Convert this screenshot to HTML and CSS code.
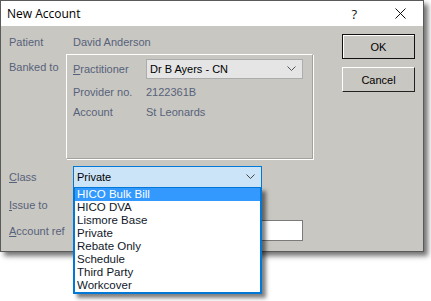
FILE: index.html
```html
<!DOCTYPE html>
<html lang="en">
<head>
  <meta charset="UTF-8" />
  <title>New Account</title>
  <link rel="stylesheet" href="styles.css">
</head>
<body>
  <div class="window">
    <div class="titlebar">
      <span class="title">New Account</span>
      <span class="help">?</span>
      <svg class="close" width="11" height="11" viewBox="0 0 11 11">
        <path d="M0.5 0.5 L10.5 10.5 M10.5 0.5 L0.5 10.5" stroke="#111" stroke-width="1" fill="none"/>
      </svg>
    </div>

    <div class="content">
      <div class="form">
        <div class="row patient">
          <span class="label">Patient</span>
          <span class="value">David Anderson</span>
        </div>

        <div class="row banked">
          <span class="label short">Banked to</span>
          <div class="group">
            <div class="grow">
              <span class="glabel"><u>P</u>ractitioner</span>
              <div class="combo">
                <span>Dr B Ayers - CN</span>
                <svg width="9" height="6" viewBox="0 0 9 6"><path d="M0.5 0.5 L4.5 4.5 L8.5 0.5" stroke="#555" fill="none"/></svg>
              </div>
            </div>
            <div class="grow text">
              <span class="glabel">Provider no.</span>
              <span class="value">2122361B</span>
            </div>
            <div class="grow text">
              <span class="glabel">Account</span>
              <span class="value">St Leonards</span>
            </div>
          </div>
        </div>

        <div class="row class-row">
          <span class="label"><u>C</u>lass</span>
          <div class="combo active">
            <span>Private</span>
            <svg width="9" height="6" viewBox="0 0 9 6"><path d="M0.5 0.5 L4.5 4.5 L8.5 0.5" stroke="#444" fill="none"/></svg>
          </div>
        </div>

        <div class="row issue">
          <span class="label"><u>I</u>ssue to</span>
        </div>

        <div class="row ref">
          <span class="label"><u>A</u>ccount ref</span>
          <div class="input"></div>
        </div>
      </div>

      <div class="buttons">
        <div class="btn default">OK</div>
        <div class="btn">Cancel</div>
      </div>
    </div>
  </div>

  <ul class="droplist">
    <li class="selected">HICO Bulk Bill</li>
    <li>HICO DVA</li>
    <li>Lismore Base</li>
    <li>Private</li>
    <li>Rebate Only</li>
    <li>Schedule</li>
    <li>Third Party</li>
    <li>Workcover</li>
  </ul>
</body>
</html>
```

FILE: styles.css
```css
html, body {
  margin: 0;
  background: #fff;
}
body {
  font-family: 'Liberation Sans', Arial, sans-serif;
  font-size: 11px;
  min-height: 301px;
  position: relative;
}
.window {
  width: 422px;
  height: 251px;
  border: 1px solid #5a5a5a;
  border-top: none;
  background: #c9c7c2;
  box-shadow: 4px 4px 5px rgba(0,0,0,0.55);
}
.titlebar {
  height: 26px;
  background: #fff;
  display: flex;
  align-items: center;
  border-top: 1px solid #5a5a5a;
  box-sizing: border-box;
}
.title {
  font-family: 'Open Sans', sans-serif;
  font-size: 12px;
  color: #000;
  padding-left: 6px;
  flex: 1;
}
.help {
  font-family: 'Open Sans', sans-serif;
  font-size: 13px;
  color: #111;
  margin-right: 38px;
}
.close {
  margin-right: 17px;
}
.content {
  display: flex;
  height: 225px;
}
.form {
  width: 341px;
  padding-left: 8px;
  box-sizing: border-box;
}
.row {
  display: flex;
  align-items: center;
}
.label {
  width: 64px;
  color: #56627a;
}
.label.short {
  width: 57px;
  align-self: flex-start;
  margin-top: 7px;
}
.value {
  color: #56627a;
}
.patient {
  height: 16px;
  margin-top: 8px;
}
.banked {
  margin-top: 4px;
  align-items: flex-start;
}
.group {
  width: 239px;
  height: 99px;
  border-top: 1px solid #fff;
  border-left: 1px solid #fff;
  border-right: 1px solid #a3a19c;
  border-bottom: 1px solid #a3a19c;
  box-shadow: 1px 1px 0 #fff;
  padding: 4px 0 0 6px;
}
.grow {
  display: flex;
  align-items: center;
}
.grow.text {
  height: 20px;
}
.grow:nth-child(2) {
  margin-top: 3px;
}
.glabel {
  width: 73px;
  color: #56627a;
}
.combo {
  display: flex;
  align-items: center;
  justify-content: space-between;
  width: 146px;
  height: 18px;
  border: 1px solid #acacac;
  background: #e5e5e5;
  padding: 0 6px 0 3px;
  color: #000;
}
.combo.active {
  width: 178px;
  height: 20px;
  border-color: #0078d7;
  background: #cce4f7;
}
.class-row {
  margin-top: 7px;
}
.issue {
  height: 16px;
  margin-top: 9px;
}
.ref {
  margin-top: 7px;
}
.ref .input {
  margin-left: 73px;
  width: 155px;
  height: 19px;
  background: #fff;
  border: 1px solid #7a7a7a;
}
.buttons {
  display: flex;
  flex-direction: column;
  gap: 8px;
  padding-top: 8px;
}
.btn {
  width: 71px;
  height: 23px;
  display: flex;
  align-items: center;
  justify-content: center;
  color: #000;
  border-top: 1px solid #fff;
  border-left: 1px solid #fff;
  border-right: 1px solid #222;
  border-bottom: 1px solid #222;
}
.btn.default {
  border: 1px solid #111;
  box-shadow: inset 1px 1px 0 #fff;
}
.droplist {
  position: absolute;
  left: 73px;
  top: 187px;
  width: 185px;
  margin: 0;
  padding: 0;
  list-style: none;
  background: #fff;
  border: 2px solid #0078d7;
  border-top-width: 1px;
  box-shadow: 4px 4px 4px rgba(0,0,0,0.5);
}
.droplist li {
  height: 13px;
  line-height: 13px;
  padding-left: 2px;
  color: #101828;
  font-size: 11.5px;
}
.droplist li.selected {
  background: #3399ff;
  color: #fff;
}
```
